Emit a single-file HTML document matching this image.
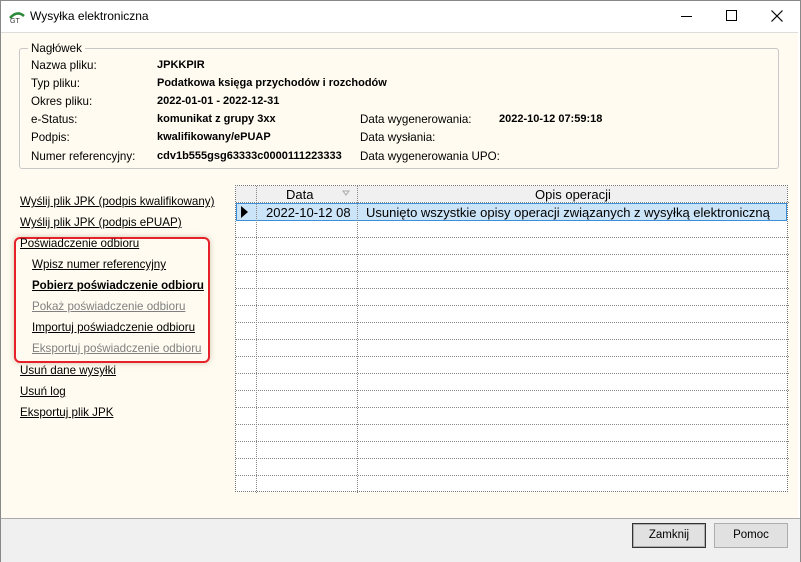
<!DOCTYPE html>
<html><head><meta charset="utf-8"><style>
*{margin:0;padding:0;box-sizing:border-box}
body{width:801px;height:562px;overflow:hidden;font-family:"Liberation Sans",sans-serif;font-size:11.6px;color:#000;background:#fff;position:relative}
.win{position:absolute;left:0;top:0;width:801px;height:562px;border:1px solid #888}
.title{position:absolute;left:0;top:0;width:799px;height:31px;background:#fff}
.title .t{position:absolute;left:29px;top:8px;font-size:12px}
.body{position:absolute;left:0;top:31px;width:797px;height:486px;background:#fffbf0;border-top:1px solid #ddd}
.foot{position:absolute;left:0;top:517px;width:799px;height:44px;background:#f0f0f0;border-top:1px solid #aaa}
.abs{position:absolute;white-space:nowrap}
b{font-weight:bold;font-size:11px}
fieldset{position:absolute;left:18px;top:47px;width:760px;height:121px;border:1px solid #c8c8c8;border-radius:3px}
.lnk{text-decoration:underline}
.gray{color:#808080}
.grid{position:absolute;left:234px;top:184px;width:553px;height:307px;background:#fff;border:1px dotted #777;font-size:13px}
.btn{position:absolute;top:522px;width:74px;height:25px;background:#e1e1e1;border:1px solid #adadad;text-align:center;line-height:23px;font-size:11.5px}
</style></head><body>
<div class="win">
<div class="title">
<svg class="abs" style="left:8px;top:9px" width="16" height="14" viewBox="0 0 16 14"><path d="M1 8 Q8 0 15 6" stroke="#2a8a3a" stroke-width="2.5" fill="none"/><text x="1" y="13" font-size="7" font-family="Liberation Sans" fill="#333">GT</text></svg>
<div class="t">Wysyłka elektroniczna</div>
<div class="abs" style="left:680px;top:15px;width:11px;height:1px;background:#000"></div>
<div class="abs" style="left:725px;top:9px;width:11px;height:11px;border:1px solid #000"></div>
<svg class="abs" style="left:770px;top:9px" width="12" height="12"><path d="M0.5 0.5 L11.5 11.5 M11.5 0.5 L0.5 11.5" stroke="#000" stroke-width="1.2"/></svg>
</div>
<div class="body"></div>
<fieldset></fieldset>
<div class="abs" style="left:27px;top:41px;background:#fffbf0;padding:0 3px">Nagłówek</div>
<div class="abs" style="left:30px;top:58px">Nazwa pliku:</div><b class="abs" style="left:156px;top:58px">JPKKPIR</b>
<div class="abs" style="left:30px;top:76px">Typ pliku:</div><b class="abs" style="left:156px;top:76px">Podatkowa księga przychodów i rozchodów</b>
<div class="abs" style="left:30px;top:94px">Okres pliku:</div><b class="abs" style="left:156px;top:94px">2022-01-01 - 2022-12-31</b>
<div class="abs" style="left:30px;top:112px">e-Status:</div><b class="abs" style="left:156px;top:112px">komunikat z grupy 3xx</b>
<div class="abs" style="left:30px;top:130px">Podpis:</div><b class="abs" style="left:156px;top:130px">kwalifikowany/ePUAP</b>
<div class="abs" style="left:30px;top:149px">Numer referencyjny:</div><b class="abs" style="left:156px;top:149px">cdv1b555gsg63333c0000111223333</b>
<div class="abs" style="left:359px;top:112px">Data wygenerowania:</div><b class="abs" style="left:498px;top:112px">2022-10-12 07:59:18</b>
<div class="abs" style="left:359px;top:130px">Data wysłania:</div>
<div class="abs" style="left:359px;top:149px">Data wygenerowania UPO:</div>

<div class="abs lnk" style="left:19px;top:194px">Wyślij plik JPK (podpis kwalifikowany)</div>
<div class="abs lnk" style="left:19px;top:215px">Wyślij plik JPK (podpis ePUAP)</div>
<div class="abs" style="left:13px;top:236px;width:196px;height:126px;border:2px solid #e8202a;border-radius:6px;box-shadow:0 0 6px rgba(120,100,60,.35)"></div>
<div class="abs lnk" style="left:19px;top:236px">Poświadczenie odbioru</div>
<div class="abs lnk" style="left:31px;top:257px">Wpisz numer referencyjny</div>
<b class="abs lnk" style="left:31px;top:279px;font-size:11.5px">Pobierz poświadczenie odbioru</b>
<div class="abs lnk gray" style="left:31px;top:299px">Pokaż poświadczenie odbioru</div>
<div class="abs lnk" style="left:31px;top:320px">Importuj poświadczenie odbioru</div>
<div class="abs lnk gray" style="left:31px;top:341px">Eksportuj poświadczenie odbioru</div>
<div class="abs lnk" style="left:19px;top:363px">Usuń dane wysyłki</div>
<div class="abs lnk" style="left:19px;top:384px">Usuń log</div>
<div class="abs lnk" style="left:19px;top:405px">Eksportuj plik JPK</div>

<div class="grid">
<div class="abs" style="left:0;top:0;width:551px;height:16px;background:#f0f0f0"></div>
<div class="abs" style="left:0;top:17px;width:551px;height:18px;background:#cce4f7;border:1px solid #3c8fd6"></div>
<svg class="abs" style="left:0;top:0" width="553" height="307">
<g stroke="#888" stroke-dasharray="1,1">
<line x1="20.5" y1="0" x2="20.5" y2="307"/><line x1="121.5" y1="0" x2="121.5" y2="307"/>
<line x1="0" y1="16.5" x2="553" y2="16.5"/>
<line x1="0" y1="51.5" x2="553" y2="51.5"/><line x1="0" y1="68.5" x2="553" y2="68.5"/><line x1="0" y1="85.5" x2="553" y2="85.5"/><line x1="0" y1="102.5" x2="553" y2="102.5"/><line x1="0" y1="119.5" x2="553" y2="119.5"/><line x1="0" y1="136.5" x2="553" y2="136.5"/><line x1="0" y1="153.5" x2="553" y2="153.5"/><line x1="0" y1="170.5" x2="553" y2="170.5"/><line x1="0" y1="187.5" x2="553" y2="187.5"/><line x1="0" y1="204.5" x2="553" y2="204.5"/><line x1="0" y1="221.5" x2="553" y2="221.5"/><line x1="0" y1="238.5" x2="553" y2="238.5"/><line x1="0" y1="255.5" x2="553" y2="255.5"/><line x1="0" y1="272.5" x2="553" y2="272.5"/><line x1="0" y1="289.5" x2="553" y2="289.5"/>
</g>
<path d="M5 20 L12 26 L5 32 Z" fill="#000"/>
<path d="M107 5 L113 5 L110 9 Z" fill="none" stroke="#aaa"/>
</svg>
<div class="abs" style="left:50px;top:1px">Data</div>
<div class="abs" style="left:299px;top:1px">Opis operacji</div>
<div class="abs" style="left:30px;top:19px">2022-10-12 08</div>
<div class="abs" style="left:130px;top:19px">Usunięto wszystkie opisy operacji związanych z wysyłką elektroniczną</div>
</div>

<div class="foot"></div>
<div class="btn" style="left:631px;border:1px solid #333;box-shadow:inset 0 0 0 1px #adadad">Zamknij</div>
<div class="btn" style="left:713px">Pomoc</div>
</div>
</body></html>
